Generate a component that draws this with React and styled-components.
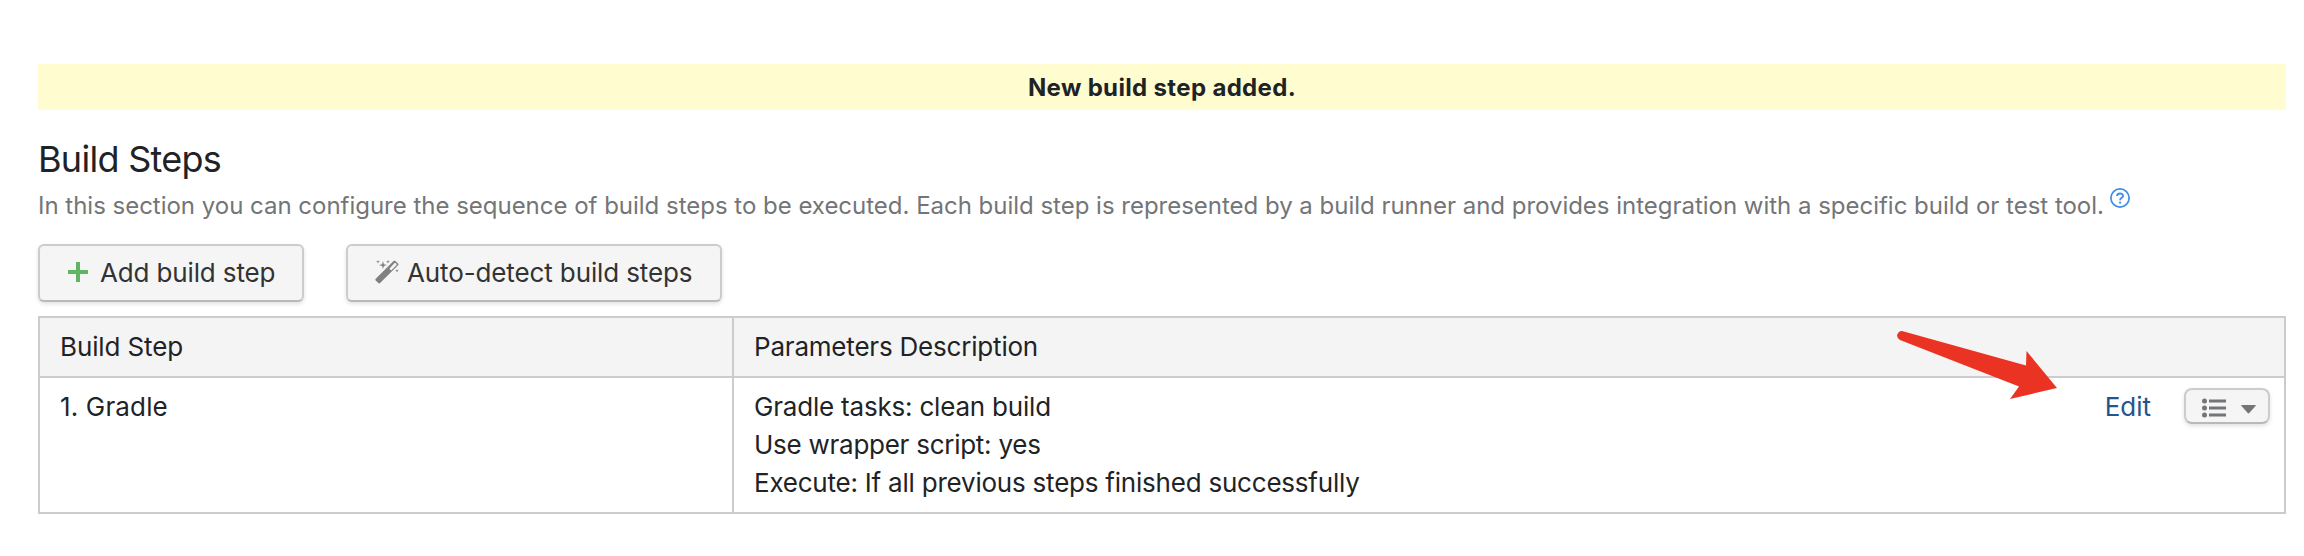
import React from "react";
import styled, { createGlobalStyle } from "styled-components";

const GlobalStyle = createGlobalStyle`
  *, *::before, *::after { box-sizing: border-box; }
  body {
    margin: 0;
    background: #fff;
    color: #1f2326;
    font-family: Inter, "Liberation Sans", sans-serif;
    font-size: 26px;
    line-height: 38px;
  }
`;

const Page = styled.main`
  position: relative;
  height: 556px;
  padding: 64px 18px 0 38px;
  overflow: hidden;
`;

const Banner = styled.div`
  height: 46px;
  padding-top: 1px;
  line-height: 46px;
  font-size: 24px;
  font-weight: 700;
  text-align: center;
  background: #fffdd0;
`;

const Title = styled.h1`
  margin: 27px 0 0;
  font-size: 36px;
  font-weight: 400;
  line-height: 44px;
`;

const Description = styled.p`
  display: flex;
  margin: 8px 0 0;
  font-size: 24px;
  line-height: 34px;
  color: #737577;
  white-space: nowrap;
`;

const HelpLink = styled.a`
  display: flex;
  margin: -1px 0 0 6px;
`;

const Toolbar = styled.div`
  display: flex;
  gap: 42px;
  margin-top: 21px;
`;

const Button = styled.button`
  display: flex;
  align-items: center;
  width: ${(p) => p.$width}px;
  height: 58px;
  padding: 0 0 2px ${(p) => p.$inset}px;
  gap: ${(p) => p.$gap}px;
  border: 2px solid #ccc;
  border-bottom-color: #b9b9b9;
  border-radius: 6px;
  background: #f5f5f5;
  box-shadow: 0 2px 4px rgba(0, 0, 0, 0.12);
  color: #333;
  font: inherit;
  white-space: nowrap;
`;

const MenuButton = styled(Button)`
  height: 36px;
  padding-top: 3px;
  padding-bottom: 0;
  border-radius: 8px;
`;

const Label = styled.span`
  letter-spacing: ${(p) => p.$tracking || 0}px;
`;

const ButtonLabel = styled(Label)`
  padding-top: 2px;
`;

const Table = styled.div`
  display: grid;
  grid-template-columns: 694px 1fr;
  margin-top: 14px;
  border: 2px solid #ccc;
`;

const HeaderCell = styled.div`
  height: 60px;
  padding: 10px 20px 0;
  background: #f4f4f4;
  border-bottom: 2px solid #ccc;
`;

const Cell = styled.div`
  display: flex;
  justify-content: space-between;
  height: 134px;
  padding: 10px 14px 0 20px;
`;

const Divided = styled.div`
  border-right: 2px solid #ccc;
`;

const Lines = styled.div`
  display: flex;
  flex-direction: column;
`;

const Actions = styled.div`
  display: flex;
  align-items: flex-start;
  gap: 33px;
`;

const EditLink = styled.a`
  color: #225590;
`;

const Caret = styled.svg`
  margin-top: 3px;
`;

const Arrow = styled.svg`
  position: absolute;
  left: 1890px;
  top: 324px;
`;

const PlusIcon = () => (
  <svg width="20" height="20" viewBox="0 0 20 20">
    <path d="M10 0V20M0 10H20" stroke="#5fb564" strokeWidth="4" />
  </svg>
);

const WandIcon = () => (
  <svg width="24" height="24" viewBox="0 0 24 24" fill="#808080">
    <path
      fillRule="evenodd"
      d="M.7 18.8 18.6.9Q19.5 0 20.4.9L23 3.5Q23.9 4.4 23 5.3L5.1 23.1Q4.2 24 3.3 23.1L.7 20.6Q-.1 19.7.7 18.8ZM14.4 8.7 16.2 10.4 21.3 5.2Q22 4.5 21.3 3.8L20.6 3.1Q20 2.5 19.3 3.2Z"
    />
    <path d="M8 1 8.9 4.2 12 5 8.9 5.9 8 9 7.1 5.9 4 5 7.1 4.2ZM3 0 3.5 1.3 4.8 1.8 3.5 2.3 3 3.6 2.5 2.3 1.2 1.8 2.5 1.3ZM13 0 13.5 1.3 14.8 1.8 13.5 2.3 13 3.6 12.5 2.3 11.2 1.8 12.5 1.3ZM22 9 22.5 10.3 23.8 10.8 22.5 11.3 22 12.6 21.5 11.3 20.2 10.8 21.5 10.3Z" />
  </svg>
);

const HelpIcon = () => (
  <svg width="20" height="20" viewBox="0 0 20 20" fill="none" stroke="#3f8ee8">
    <circle cx="10" cy="10" r="9.1" strokeWidth="1.7" />
    <path d="M7.1 8.1C7.1 4.5 13 4.7 13 7.9 13 9.8 10.1 9.8 10.1 12.2" strokeWidth="1.9" />
    <circle cx="10.1" cy="14.7" r="1.1" fill="#3f8ee8" stroke="none" />
  </svg>
);

const ListIcon = () => (
  <svg width="24" height="20" viewBox="0 0 24 20" fill="#737577">
    {[3, 10, 17].map((y) => (
      <g key={y}>
        <circle cx="2.5" cy={y} r="2.5" />
        <rect x="7" y={y - 1.5} width="17" height="3" />
      </g>
    ))}
  </svg>
);

const CaretIcon = () => (
  <Caret width="15" height="9" viewBox="0 0 15 9">
    <path d="M.7 0H14.3Q15.3 0 14.5 1L8.3 8Q7.5 8.8 6.7 8L.5 1Q-.3 0 .7 0Z" fill="#737577" />
  </Caret>
);

export default function App() {
  return (
    <>
      <GlobalStyle />
      <Page>
        <Banner><Label $tracking={0.34}>New build step added.</Label></Banner>
        <Title><Label $tracking={-0.72}>Build Steps</Label></Title>
        <Description>
          <Label $tracking={-0.016}>
            In this section you can configure the sequence of build steps to be executed. Each build step is represented by a build runner and provides integration with a specific build or test tool.
          </Label>
          <HelpLink><HelpIcon /></HelpLink>
        </Description>
        <Toolbar>
          <Button $width={266} $inset={28} $gap={12}>
            <PlusIcon />
            <ButtonLabel $tracking={-0.14}>Add build step</ButtonLabel>
          </Button>
          <Button $width={376} $inset={27} $gap={8}>
            <WandIcon />
            <ButtonLabel $tracking={-0.12}>Auto-detect build steps</ButtonLabel>
          </Button>
        </Toolbar>
        <Table>
          <Divided><HeaderCell><Label $tracking={-0.12}>Build Step</Label></HeaderCell></Divided>
          <HeaderCell><Label $tracking={-0.2}>Parameters Description</Label></HeaderCell>
          <Divided><Cell><Label $tracking={0.15}>1. Gradle</Label></Cell></Divided>
          <Cell>
            <Lines>
              <Label $tracking={-0.2}>Gradle tasks: clean build</Label>
              <Label $tracking={-0.26}>Use wrapper script: yes</Label>
              <Label $tracking={-0.22}>Execute: If all previous steps finished successfully</Label>
            </Lines>
            <Actions>
              <EditLink>Edit</EditLink>
              <MenuButton $width={86} $inset={16} $gap={15}>
                <ListIcon />
                <CaretIcon />
              </MenuButton>
            </Actions>
          </Cell>
        </Table>
        <Arrow width="176" height="84" viewBox="1890 324 176 84">
          <path
            d="M1902 331 2026 365.5 2026.5 351 2057 388 2010 399 2019 386.5 1900 340Q1896 337 1897.5 334 1899 330.5 1902 331Z"
            fill="#eb3323"
          />
        </Arrow>
      </Page>
    </>
  );
}
